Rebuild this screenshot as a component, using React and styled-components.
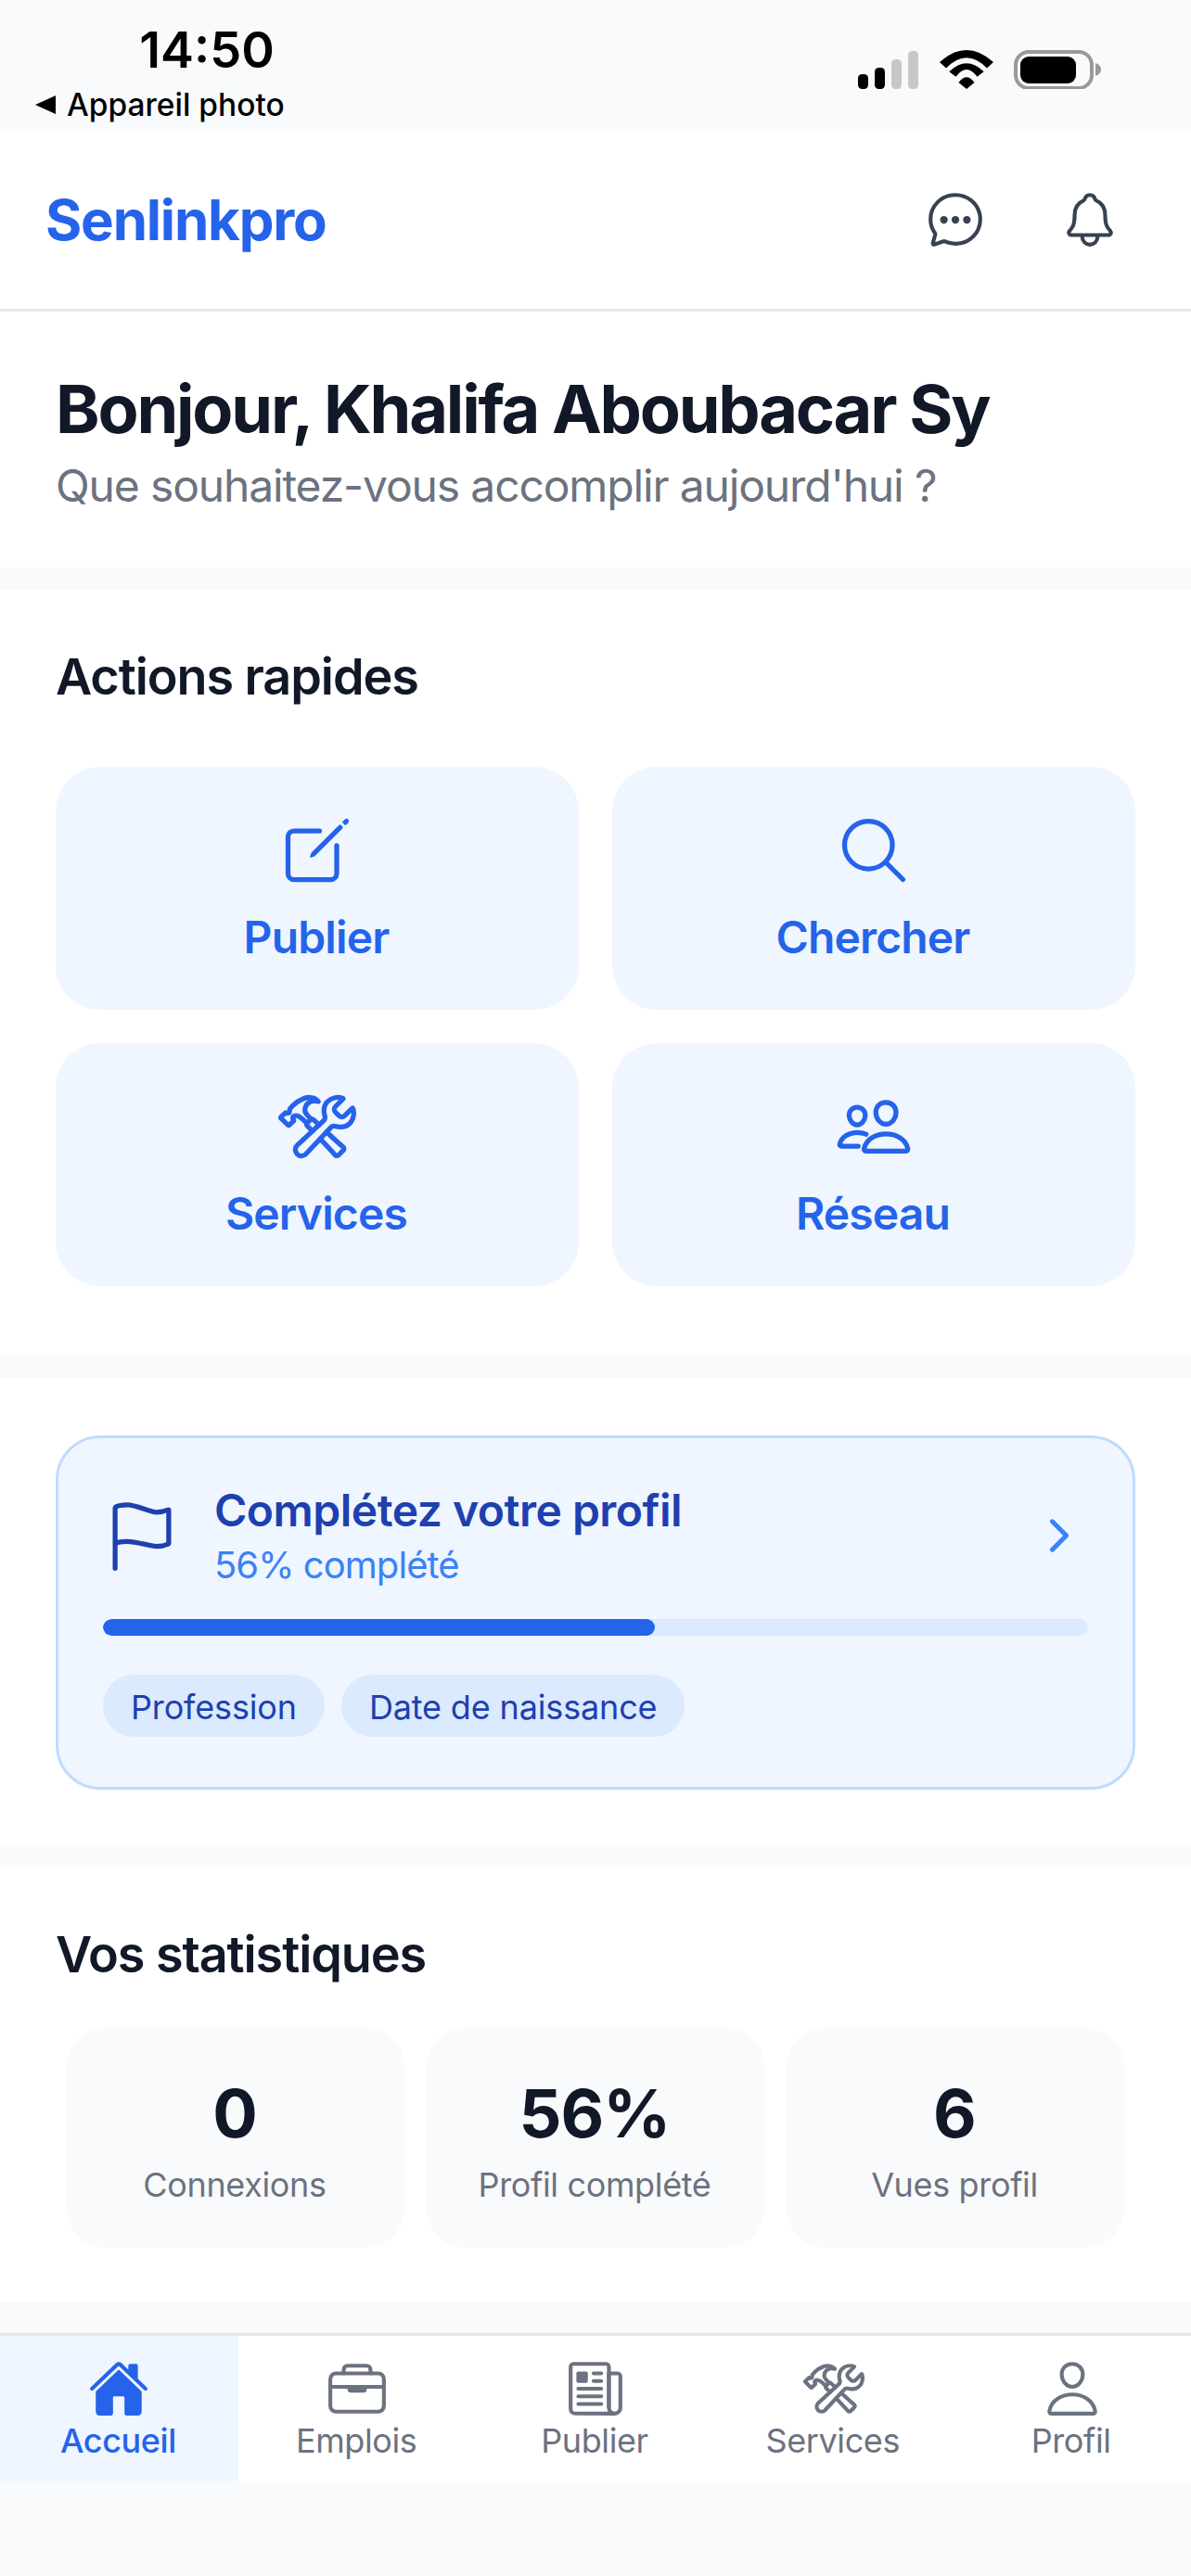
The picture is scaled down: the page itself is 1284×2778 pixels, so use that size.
import React from "react";
import styled, { createGlobalStyle } from "styled-components";
import {
  IoChatbubbleEllipsesOutline, IoNotificationsOutline, IoCreateOutline, IoSearchOutline,
  IoConstructOutline, IoPeopleOutline, IoFlagOutline, IoChevronForward, IoHome,
  IoBriefcaseOutline, IoNewspaperOutline, IoPersonOutline,
} from "react-icons/io5";

const Global = createGlobalStyle`
  html, body { margin: 0; padding: 0; background: #f9fafb; }
  * { box-sizing: border-box; }
  body { font-family: Inter, "Liberation Sans", sans-serif; }
`;

const Page = styled.div`
  width: 1284px;
  height: 2778px;
  overflow: hidden;
  background: #f9fafb;
  display: flex;
  flex-direction: column;
`;

const StatusBar = styled.div`
  height: 141px;
  display: flex;
  justify-content: space-between;
  padding: 25px 97px 0 38px;
`;
const StatusLeft = styled.div`
  display: flex;
  flex-direction: column;
  align-items: flex-start;
  width: 270px;
`;
const Time = styled.div`
  align-self: center;
  font-size: 54px;
  line-height: 58px;
  font-weight: 600;
  color: #000;
  margin-left: 100px;
`;
const BackLink = styled.div`
  display: flex;
  align-items: center;
  gap: 12px;
  font-size: 33.5px;
  line-height: 40px;
  font-weight: 500;
  color: #000;
  margin-top: 10px;
  white-space: nowrap;
`;
const BackArrow = styled.span`
  width: 0;
  height: 0;
  border-top: 10px solid transparent;
  border-bottom: 10px solid transparent;
  border-right: 22px solid #000;
`;
const StatusIcons = styled.div`
  display: flex;
  align-items: flex-end;
  margin-top: 29px;
  height: 42px;
`;

const Header = styled.header`
  height: 195px;
  background: #fff;
  border-bottom: 3px solid #e5e7eb;
  display: flex;
  align-items: center;
  justify-content: space-between;
  padding: 0 76px 0 49px;
`;
const Logo = styled.div`
  font-size: 60px;
  font-weight: 700;
  color: #2563eb;
  letter-spacing: -1.2px;
`;
const HeaderIcons = styled.div`
  display: flex;
  align-items: center;
  gap: 79px;
  color: #374151;
`;

const Section = styled.section`
  background: #fff;
  margin-bottom: 24px;
  padding: ${(p) => p.$pad};
`;
const Greeting = styled.h1`
  margin: 0;
  font-size: 72px;
  line-height: 96px;
  font-weight: 700;
  color: #111827;
  letter-spacing: -2.2px;
`;
const Subtitle = styled.p`
  margin: 5px 0 0;
  font-size: 48px;
  line-height: 60px;
  color: #6b7280;
  letter-spacing: -1.15px;
`;
const SectionTitle = styled.h2`
  margin: 0;
  font-size: 54px;
  line-height: 72px;
  font-weight: 600;
  color: #111827;
  letter-spacing: -1.1px;
`;
const ActionGrid = styled.div`
  display: grid;
  grid-template-columns: 1fr 1fr;
  gap: 36px;
  margin-top: 61px;
`;
const ActionCard = styled.div`
  height: 262px;
  border-radius: 48px;
  background: #eff6ff;
  color: #2563eb;
  display: flex;
  flex-direction: column;
  align-items: center;
  justify-content: center;
  gap: 22px;
`;
const ActionLabel = styled.span`
  font-size: 48px;
  line-height: 60px;
  font-weight: 600;
  letter-spacing: -0.85px;
  margin-right: 2px;
`;
const ProfileCard = styled.div`
  height: 382px;
  border: 3px solid #bfdbfe;
  border-radius: 48px;
  background: #eff6ff;
  padding: 48px 48px 0;
`;
const ProfileTop = styled.div`
  display: flex;
  align-items: center;
  color: #1e40af;
`;
const ProfileText = styled.div`
  flex: 1;
  margin-left: 36px;
`;
const ProfileTitle = styled.div`
  font-size: 48px;
  line-height: 60px;
  font-weight: 600;
  color: #1e40af;
  letter-spacing: -0.5px;
`;
const ProfileSub = styled.div`
  font-size: 40px;
  line-height: 52px;
  margin-top: 3px;
  color: #3b82f6;
  letter-spacing: -0.95px;
`;
const ChevronSlot = styled.span`
  display: flex;
  margin-right: 4px;
  margin-top: -2px;
`;
const ProgressTrack = styled.div`
  height: 18px;
  margin-top: 32px;
  border-radius: 9px;
  background: #dbeafe;
  overflow: hidden;
`;
const ProgressFill = styled.div`
  height: 100%;
  border-radius: 9px;
  background: #2563eb;
`;
const Chips = styled.div`
  display: flex;
  gap: 18px;
  margin-top: 42px;
`;
const Chip = styled.span`
  height: 67px;
  padding: 0 30px;
  border-radius: 34px;
  background: #dbeafe;
  color: #1e40af;
  font-size: 36px;
  line-height: 70px;
  letter-spacing: -0.15px;
`;
const StatsRow = styled.div`
  display: flex;
  justify-content: space-between;
  margin-top: 43px;
  padding: 0 12px;
`;
const StatCard = styled.div`
  width: 364px;
  height: 237px;
  border-radius: 42px;
  background: #f9fafb;
  display: flex;
  flex-direction: column;
  align-items: center;
  justify-content: center;
  gap: 5px;
`;
const StatValue = styled.div`
  font-size: 72px;
  line-height: 96px;
  font-weight: 700;
  color: #111827;
  letter-spacing: -1px;
  margin-right: 2px;
`;
const StatLabel = styled.div`
  font-size: 36px;
  line-height: 48px;
  color: #6b7280;
  letter-spacing: -0.35px;
  margin-right: 2px;
`;
const Nav = styled.nav`
  height: 160px;
  margin-top: auto;
  margin-bottom: 102px;
  background: #fff;
  border-top: 3px solid #e5e7eb;
  display: flex;
`;
const NavItem = styled.div`
  flex: 1;
  display: flex;
  flex-direction: column;
  align-items: center;
  padding-top: 24px;
  background: ${(p) => (p.$active ? "#eff6ff" : "#fff")};
  color: ${(p) => (p.$active ? "#2563eb" : "#6b7280")};
`;
const NavLabel = styled.span`
  font-size: 36px;
  line-height: 48px;
  font-weight: ${(p) => (p.$active ? 500 : 400)};
  margin: -1px 2px 0 0;
  letter-spacing: -0.4px;
`;

const SignalBar = ({ x, y, on }) => (
  <rect x={x} y={y} width="11" height={42 - y} rx="4.5" fill={on ? "#000" : "#c7c7c7"} />
);

const StatusGlyphs = () => (
  <svg width="262" height="42" viewBox="0 0 262 42">
    <SignalBar x={0} y={26} on />
    <SignalBar x={18} y={19} on />
    <SignalBar x={36} y={10} />
    <SignalBar x={54} y={1} />
    <path d="M88 13 Q117 -13 146 13 L139 19.5 Q117 -3 95 19.5 Z" fill="#000" />
    <path d="M98.3 23.3 Q117 5.3 135.7 23.3 L128.5 28.7 Q117 13.3 105.5 28.7 Z" fill="#000" />
    <path d="M108.5 35 Q117 23.6 125.5 35 L117 42 Z" fill="#000" />
    <rect x="170" y="2" width="82" height="39" rx="14" fill="none" stroke="#999" strokeWidth="4" />
    <rect x="175" y="7" width="60" height="29" rx="9" fill="#000" />
    <path d="M256 14 Q262 16 262 21 Q262 26 256 28 Z" fill="#999" />
  </svg>
);

const actions = [
  { label: "Publier", Icon: IoCreateOutline },
  { label: "Chercher", Icon: IoSearchOutline },
  { label: "Services", Icon: IoConstructOutline },
  { label: "Réseau", Icon: IoPeopleOutline },
];
const stats = [
  { value: "0", label: "Connexions" },
  { value: "56%", label: "Profil complété" },
  { value: "6", label: "Vues profil" },
];
const tabs = [
  { label: "Accueil", Icon: IoHome, active: true },
  { label: "Emplois", Icon: IoBriefcaseOutline },
  { label: "Publier", Icon: IoNewspaperOutline },
  { label: "Services", Icon: IoConstructOutline },
  { label: "Profil", Icon: IoPersonOutline },
];

export default function App() {
  return (
    <Page>
      <Global />
      <StatusBar>
        <StatusLeft>
          <Time>14:50</Time>
          <BackLink><BackArrow />Appareil photo</BackLink>
        </StatusLeft>
        <StatusIcons><StatusGlyphs /></StatusIcons>
      </StatusBar>
      <Header>
        <Logo>Senlinkpro</Logo>
        <HeaderIcons>
          <IoChatbubbleEllipsesOutline size={66} />
          <IoNotificationsOutline size={66} />
        </HeaderIcons>
      </Header>
      <Section $pad="57px 60px 58px">
        <Greeting>Bonjour, Khalifa Aboubacar Sy</Greeting>
        <Subtitle>Que souhaitez-vous accomplir aujourd'hui ?</Subtitle>
      </Section>
      <Section $pad="58px 60px 75px">
        <SectionTitle>Actions rapides</SectionTitle>
        <ActionGrid>
          {actions.map(({ label, Icon }) => (
            <ActionCard key={label}>
              <Icon size={84} />
              <ActionLabel>{label}</ActionLabel>
            </ActionCard>
          ))}
        </ActionGrid>
      </Section>
      <Section $pad="62px 60px 60px">
        <ProfileCard>
          <ProfileTop>
            <IoFlagOutline size={84} />
            <ProfileText>
              <ProfileTitle>Complétez votre profil</ProfileTitle>
              <ProfileSub>56% complété</ProfileSub>
            </ProfileText>
            <ChevronSlot><IoChevronForward size={54} color="#3b82f6" /></ChevronSlot>
          </ProfileTop>
          <ProgressTrack><ProgressFill style={{ width: "56%" }} /></ProgressTrack>
          <Chips>
            <Chip>Profession</Chip>
            <Chip>Date de naissance</Chip>
          </Chips>
        </ProfileCard>
      </Section>
      <Section $pad="58px 60px 59px">
        <SectionTitle>Vos statistiques</SectionTitle>
        <StatsRow>
          {stats.map((s) => (
            <StatCard key={s.label}>
              <StatValue>{s.value}</StatValue>
              <StatLabel>{s.label}</StatLabel>
            </StatCard>
          ))}
        </StatsRow>
      </Section>
      <Nav>
        {tabs.map(({ label, Icon, active }) => (
          <NavItem key={label} $active={active}>
            <Icon size={66} />
            <NavLabel $active={active}>{label}</NavLabel>
          </NavItem>
        ))}
      </Nav>
    </Page>
  );
}
